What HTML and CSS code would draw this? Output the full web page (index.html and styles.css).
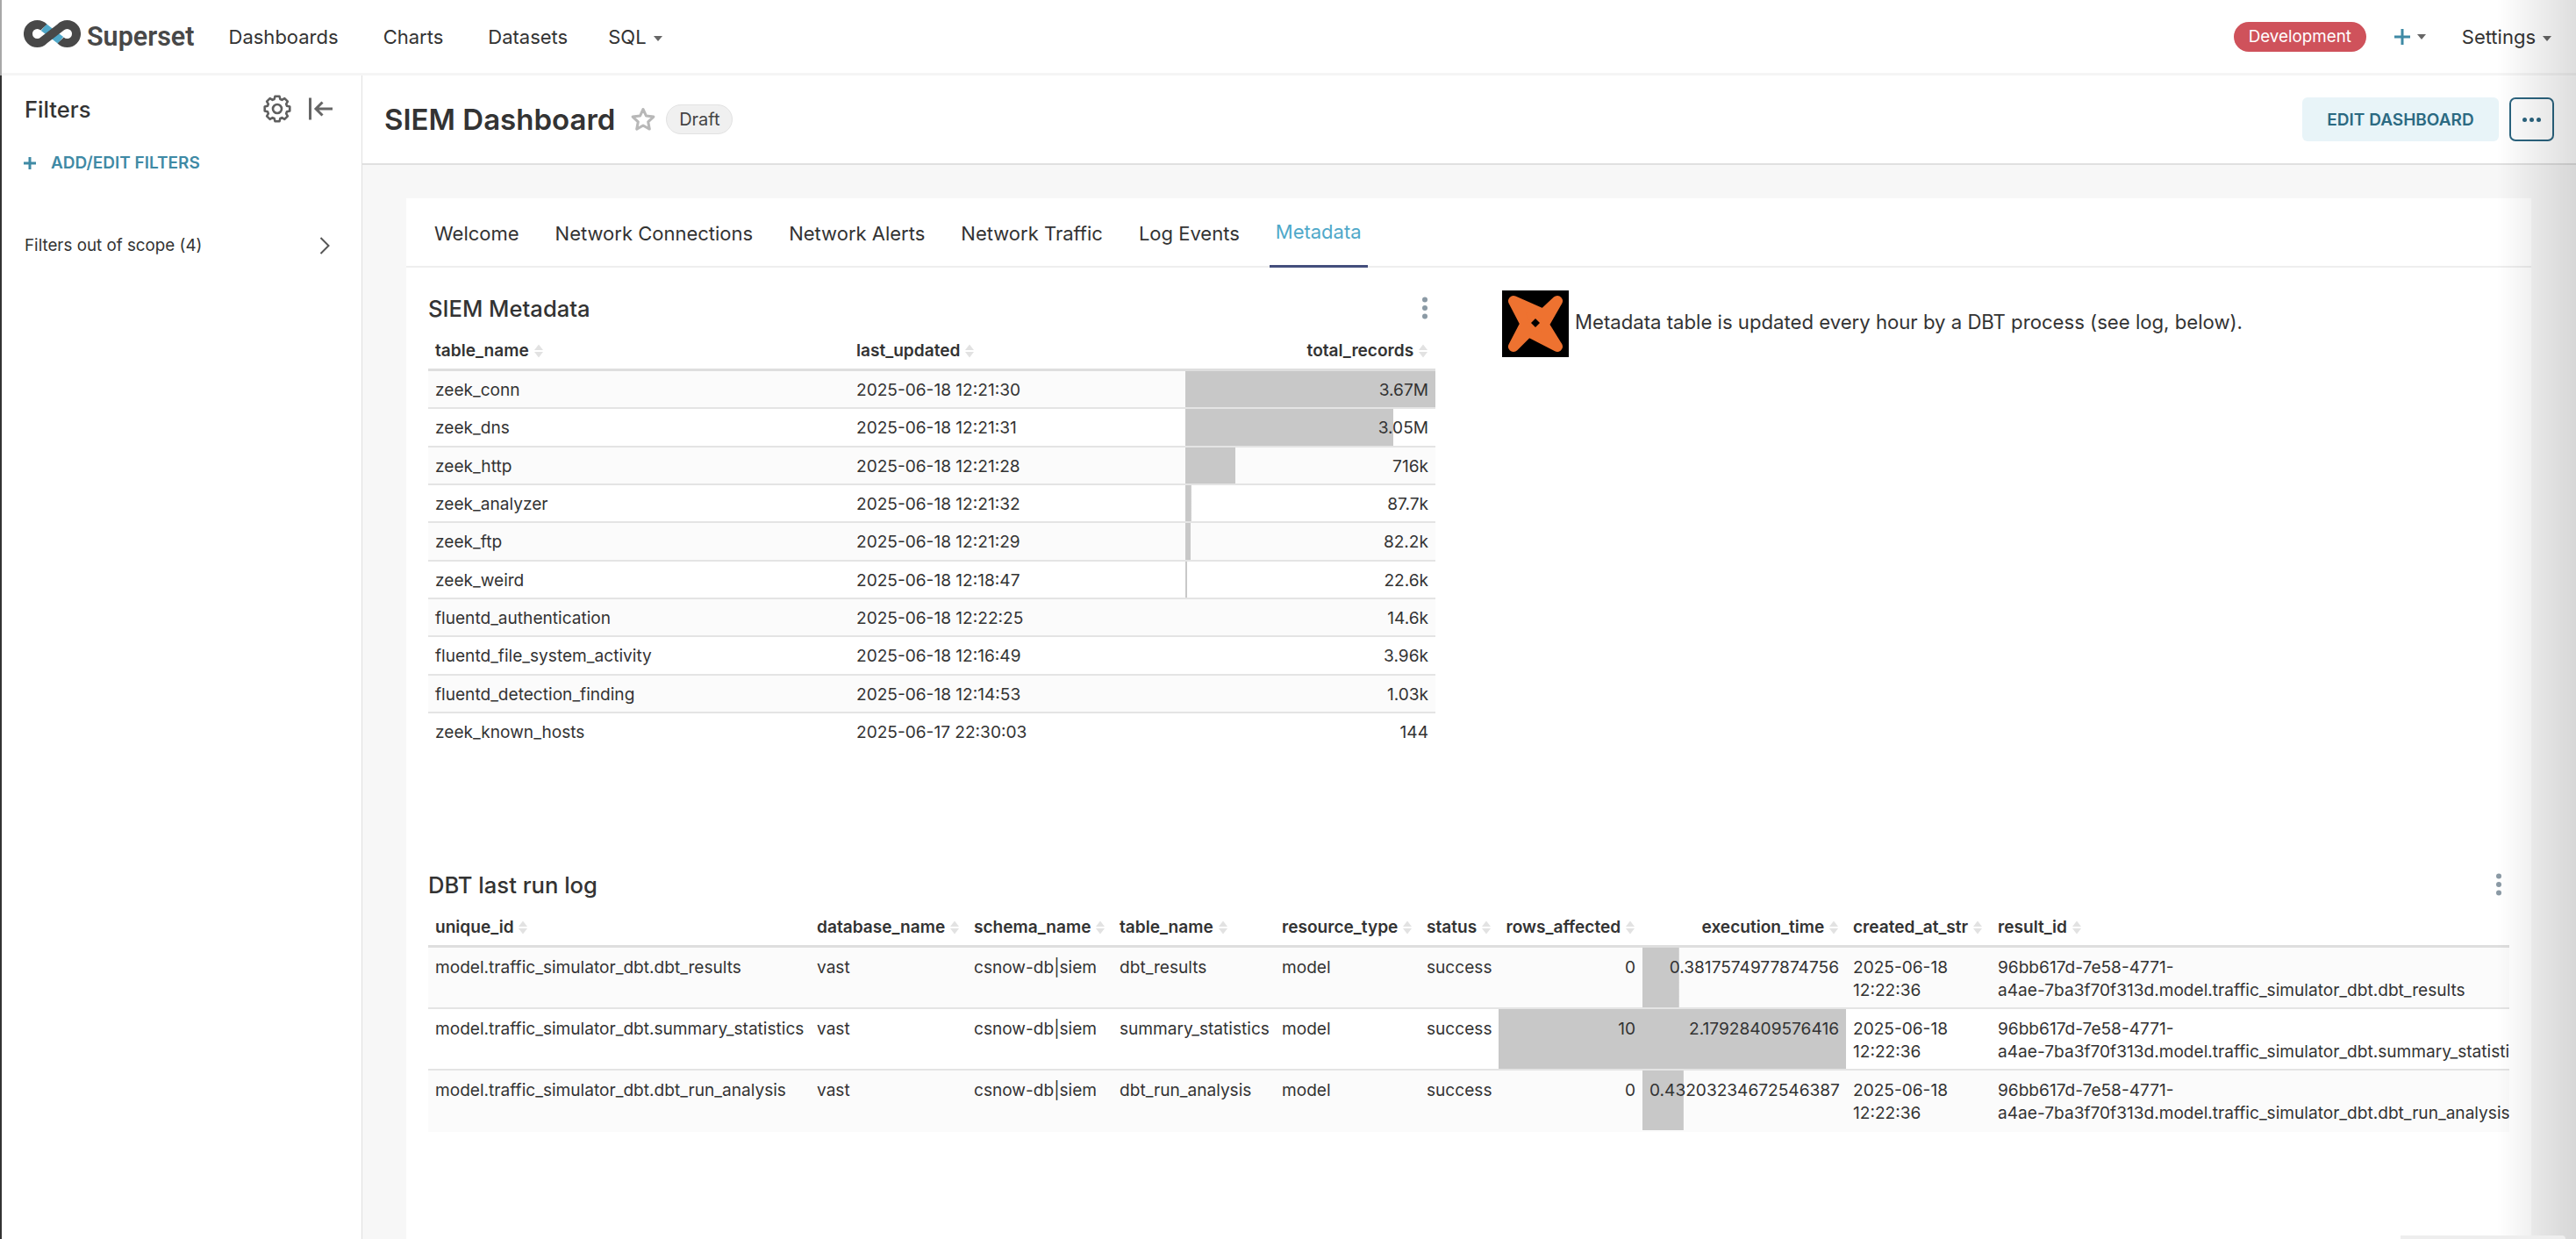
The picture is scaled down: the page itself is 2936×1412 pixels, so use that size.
FILE: index.html
```html
<!DOCTYPE html>
<html lang="en">
<head>
  <meta charset="UTF-8" />
  <title>SIEM Dashboard - Superset</title>
  <link rel="stylesheet" href="styles.css">
</head>
<body>
  <svg class="defs" width="0" height="0">
    <symbol id="sort" viewBox="0 0 12 16">
      <path d="M6 0.5 L11 7 H1 Z" fill="#e2e2e2"/>
      <path d="M6 15.5 L11 9 H1 Z" fill="#e2e2e2"/>
    </symbol>
    <symbol id="kebab" viewBox="0 0 8 26">
      <circle cx="4" cy="3.5" r="3" fill="#8b9aa5"/>
      <circle cx="4" cy="13" r="3" fill="#8b9aa5"/>
      <circle cx="4" cy="22.5" r="3" fill="#8b9aa5"/>
    </symbol>
  </svg>

  <header class="topnav">
    <div class="brand">
      <svg class="brand-logo" viewBox="0 0 65 31">
        <path d="M22.9 8.1 L42.1 22.9" fill="none" stroke="#4fa8c9" stroke-width="10"/>
        <path d="M22.9 8.1 A10.5 10.5 0 1 0 22.9 22.9 L42.1 8.1 A10.5 10.5 0 1 1 42.1 22.9" fill="none" stroke="#484848" stroke-width="10"/>
      </svg>
      <span class="brand-name">Superset</span>
    </div>
    <nav class="menu">
      <a>Dashboards</a>
      <a>Charts</a>
      <a>Datasets</a>
      <a>SQL<i class="caret"></i></a>
    </nav>
    <div class="nav-right">
      <span class="env">Development</span>
      <span class="plus">
        <svg width="18" height="18" viewBox="0 0 18 18"><path d="M9 0 V18 M0 9 H18" stroke="#3f8aa5" stroke-width="3"/></svg>
        <i class="caret"></i>
      </span>
      <span class="settings">Settings<i class="caret"></i></span>
    </div>
  </header>

  <div class="main">
    <aside class="sidebar">
      <div class="side-head">
        <h3>Filters</h3>
        <svg class="gear" viewBox="-17 -17 34 34">
          <path d="M2.52 -14.28 L3.36 -11 5.4 -10.15 8.32 -11.88 11.88 -8.32 10.15 -5.4 11 -3.36 14.28 -2.52 14.28 2.52 11 3.36 10.15 5.4 11.88 8.32 8.32 11.88 5.4 10.15 3.36 11 2.52 14.28 -2.52 14.28 -3.36 11 -5.4 10.15 -8.32 11.88 -11.88 8.32 -10.15 5.4 -11 3.36 -14.28 2.52 -14.28 -2.52 -11 -3.36 -10.15 -5.4 -11.88 -8.32 -8.32 -11.88 -5.4 -10.15 -3.36 -11 -2.52 -14.28 Z" fill="none" stroke="#5f5f5f" stroke-width="2.6" stroke-linejoin="round"/>
          <circle r="5" fill="none" stroke="#5f5f5f" stroke-width="2.6"/>
        </svg>
        <svg class="collapse" viewBox="0 0 28 26">
          <path d="M1.5 0.5 V25.5 M8 13 H27 M15.5 5.5 L8 13 L15.5 20.5" fill="none" stroke="#666" stroke-width="3"/>
        </svg>
      </div>
      <a class="add-filters">
        <svg width="14" height="14" viewBox="0 0 14 14"><path d="M7 0 V14 M0 7 H14" stroke="#3f8aa5" stroke-width="3"/></svg>
        ADD/EDIT FILTERS
      </a>
      <div class="out-of-scope">
        <span>Filters out of scope (4)</span>
        <svg width="12" height="20" viewBox="0 0 12 20"><path d="M1.5 1 L10.5 10 L1.5 19" fill="none" stroke="#555" stroke-width="2"/></svg>
      </div>
    </aside>

    <div class="content">
      <div class="titlebar">
        <h1>SIEM Dashboard</h1>
        <svg class="star" viewBox="0 0 28 26">
          <polygon points="14,1.5 17.5,9.1 25.9,10.1 19.7,15.9 21.3,24.1 14,20 6.7,24.1 8.3,15.9 2.1,10.1 10.5,9.1" fill="none" stroke="#b8b8b8" stroke-width="3" stroke-linejoin="round"/>
        </svg>
        <span class="draft">Draft</span>
        <div class="title-actions">
          <button class="edit-btn">EDIT DASHBOARD</button>
          <button class="more-btn"><i></i><i></i><i></i></button>
        </div>
      </div>

      <div class="canvas">
        <div class="card">
          <div class="tabs">
            <a>Welcome</a>
            <a>Network Connections</a>
            <a>Network Alerts</a>
            <a>Network Traffic</a>
            <a>Log Events</a>
            <a class="active">Metadata</a>
          </div>

          <div class="row">
            <section class="chart chart-meta">
              <div class="chart-head">
                <h2>SIEM Metadata</h2>
                <svg class="kebab"><use href="#kebab"/></svg>
              </div>
              <table class="grid meta-table">
                <colgroup><col class="m1"><col class="m2"><col class="m3"></colgroup>
                <thead>
                  <tr>
                    <th>table_name <svg class="sort"><use href="#sort"/></svg></th>
                    <th>last_updated <svg class="sort"><use href="#sort"/></svg></th>
                    <th class="num">total_records <svg class="sort"><use href="#sort"/></svg></th>
                  </tr>
                </thead>
                <tbody>
                  <tr><td>zeek_conn</td><td>2025-06-18 12:21:30</td><td class="num bar" style="background-size:100% 100%">3.67M</td></tr>
                  <tr><td>zeek_dns</td><td>2025-06-18 12:21:31</td><td class="num bar" style="background-size:83.2% 100%">3.05M</td></tr>
                  <tr><td>zeek_http</td><td>2025-06-18 12:21:28</td><td class="num bar" style="background-size:20% 100%">716k</td></tr>
                  <tr><td>zeek_analyzer</td><td>2025-06-18 12:21:32</td><td class="num bar" style="background-size:2.4% 100%">87.7k</td></tr>
                  <tr><td>zeek_ftp</td><td>2025-06-18 12:21:29</td><td class="num bar" style="background-size:2.2% 100%">82.2k</td></tr>
                  <tr><td>zeek_weird</td><td>2025-06-18 12:18:47</td><td class="num bar" style="background-size:0.7% 100%">22.6k</td></tr>
                  <tr><td>fluentd_authentication</td><td>2025-06-18 12:22:25</td><td class="num">14.6k</td></tr>
                  <tr><td>fluentd_file_system_activity</td><td>2025-06-18 12:16:49</td><td class="num">3.96k</td></tr>
                  <tr><td>fluentd_detection_finding</td><td>2025-06-18 12:14:53</td><td class="num">1.03k</td></tr>
                  <tr><td>zeek_known_hosts</td><td>2025-06-17 22:30:03</td><td class="num">144</td></tr>
                </tbody>
              </table>
            </section>

            <div class="note">
              <svg class="dbt-logo" viewBox="0 0 76 76">
                <rect width="76" height="76" fill="#000"/>
                <polygon points="13,12 47,27 63,12 47.5,39 63,64 30,47 13,64 26.5,38" fill="#ee7230" stroke="#ee7230" stroke-width="12" stroke-linejoin="round"/>
                <polygon points="38,32 43,37 38,42 33,37" fill="#000"/>
              </svg>
              <span class="note-text">Metadata table is updated every hour by a DBT process (see log, below).</span>
            </div>
          </div>

          <section class="chart chart-log">
            <div class="chart-head">
              <h2>DBT last run log</h2>
              <svg class="kebab"><use href="#kebab"/></svg>
            </div>
            <table class="grid log-table">
              <colgroup>
                <col class="l1"><col class="l2"><col class="l3"><col class="l4"><col class="l5">
                <col class="l6"><col class="l7"><col class="l8"><col class="l9"><col class="l10">
              </colgroup>
              <thead>
                <tr>
                  <th>unique_id <svg class="sort"><use href="#sort"/></svg></th>
                  <th>database_name <svg class="sort"><use href="#sort"/></svg></th>
                  <th>schema_name <svg class="sort"><use href="#sort"/></svg></th>
                  <th>table_name <svg class="sort"><use href="#sort"/></svg></th>
                  <th>resource_type <svg class="sort"><use href="#sort"/></svg></th>
                  <th>status <svg class="sort"><use href="#sort"/></svg></th>
                  <th class="num">rows_affected <svg class="sort"><use href="#sort"/></svg></th>
                  <th class="num">execution_time <svg class="sort"><use href="#sort"/></svg></th>
                  <th>created_at_str <svg class="sort"><use href="#sort"/></svg></th>
                  <th>result_id <svg class="sort"><use href="#sort"/></svg></th>
                </tr>
              </thead>
              <tbody>
                <tr>
                  <td>model.traffic_simulator_dbt.dbt_results</td><td>vast</td><td>csnow-db|siem</td><td>dbt_results</td><td>model</td><td>success</td>
                  <td class="num">0</td>
                  <td class="num bar" style="background-size:18% 100%">0.3817574977874756</td>
                  <td>2025-06-18 12:22:36</td>
                  <td class="result">96bb617d-7e58-4771-<br>a4ae-7ba3f70f313d.model.traffic_simulator_dbt.dbt_results</td>
                </tr>
                <tr>
                  <td>model.traffic_simulator_dbt.summary_statistics</td><td>vast</td><td>csnow-db|siem</td><td>summary_statistics</td><td>model</td><td>success</td>
                  <td class="num bar" style="background-size:100% 100%">10</td>
                  <td class="num bar" style="background-size:100% 100%">2.17928409576416</td>
                  <td>2025-06-18 12:22:36</td>
                  <td class="result">96bb617d-7e58-4771-<br>a4ae-7ba3f70f313d.model.traffic_simulator_dbt.summary_statistics</td>
                </tr>
                <tr>
                  <td>model.traffic_simulator_dbt.dbt_run_analysis</td><td>vast</td><td>csnow-db|siem</td><td>dbt_run_analysis</td><td>model</td><td>success</td>
                  <td class="num">0</td>
                  <td class="num bar" style="background-size:20.2% 100%">0.43203234672546387</td>
                  <td>2025-06-18 12:22:36</td>
                  <td class="result">96bb617d-7e58-4771-<br>a4ae-7ba3f70f313d.model.traffic_simulator_dbt.dbt_run_analysis</td>
                </tr>
              </tbody>
            </table>
          </section>
        </div>
      </div>
    </div>
  </div>

  <div class="edge-line"></div>
  <div class="edge-shadow"></div>
  <div class="corner-panel"></div>
</body>
</html>
```

FILE: styles.css
```css
body {
  font-family: Inter, "Noto Sans", sans-serif;
  font-size: 19.1px;
  color: #333;
  background: #fff;
  margin: 0;
  height: 100vh;
  overflow: hidden;
}

.defs {
  position: absolute;
}

/* top nav */
.topnav {
  display: flex;
  align-items: center;
  height: 83px;
  padding: 0 28px 0 27px;
  border-bottom: 3px solid #f5f5f5;
}

.brand {
  display: flex;
  align-items: center;
  gap: 7px;
}

.brand-logo {
  width: 65px;
  height: 31px;
  margin-top: -6px;
}

.brand-name {
  font-family: Roboto, sans-serif;
  font-weight: 600;
  font-size: 30.5px;
  color: #484848;
}

.menu {
  display: flex;
  gap: 51px;
  margin-left: 39px;
  font-size: 22px;
}

.menu a:last-child {
  margin-left: -5px;
}

.caret {
  display: inline-block;
  margin-left: 8px;
  vertical-align: middle;
  border-left: 5px solid transparent;
  border-right: 5px solid transparent;
  border-top: 6px solid #666;
}

.nav-right {
  display: flex;
  align-items: center;
  margin-left: auto;
  font-size: 22px;
}

.env {
  display: flex;
  align-items: center;
  justify-content: center;
  width: 151px;
  height: 34px;
  border-radius: 17px;
  background: #cf525b;
  color: #fff;
  font-size: 18.8px;
}

.plus {
  display: flex;
  align-items: center;
  margin-left: 32px;
  margin-right: 41px;
}

/* sidebar */
.main {
  display: flex;
  height: calc(100vh - 86px);
}

.sidebar {
  flex: 0 0 413px;
  box-sizing: border-box;
  padding: 0 36px 0 28px;
  border-right: 1px solid #e0e0e0;
}

.side-head {
  display: flex;
  align-items: center;
  height: 76px;
  margin-right: -4px;
}

.side-head h3 {
  margin: 0 auto 0 0;
  font-size: 25.6px;
  font-weight: 500;
}

.gear {
  width: 34px;
  height: 34px;
  margin-right: 19px;
}

.collapse {
  width: 28px;
  height: 26px;
}

.add-filters {
  display: flex;
  align-items: center;
  gap: 17px;
  margin: 12px 0 0 -1px;
  color: #3f8aa5;
  font-weight: 600;
  font-size: 19px;
}

.out-of-scope {
  display: flex;
  align-items: center;
  justify-content: space-between;
  margin-top: 71px;
  font-size: 18.8px;
}

/* title bar */
.content {
  flex: 1;
  display: flex;
  flex-direction: column;
  min-width: 0;
}

.titlebar {
  display: flex;
  align-items: center;
  height: 100px;
  padding: 0 25px;
  border-bottom: 2px solid #e0e0e0;
}

.titlebar h1 {
  margin: 0;
  font-size: 33px;
  font-weight: 600;
}

.star {
  width: 28px;
  height: 26px;
  margin-left: 18px;
}

.draft {
  display: flex;
  align-items: center;
  justify-content: center;
  width: 76px;
  height: 34px;
  box-sizing: border-box;
  margin-left: 12px;
  border: 1px solid #e2e2e2;
  border-radius: 17px;
  background: #f0f0f0;
  color: #444;
  font-size: 20px;
}

.title-actions {
  display: flex;
  gap: 12px;
  margin-left: auto;
}

.edit-btn {
  width: 224px;
  height: 50px;
  border: none;
  border-radius: 6px;
  background: #e8f4f8;
  color: #2b6a82;
  font-family: inherit;
  font-size: 19px;
  font-weight: 600;
}

.more-btn {
  display: flex;
  align-items: center;
  justify-content: center;
  gap: 3px;
  width: 51px;
  height: 50px;
  border: 2px solid #2c6580;
  border-radius: 7px;
  background: #fff;
}

.more-btn i {
  width: 5px;
  height: 5px;
  border-radius: 50%;
  background: #2c6580;
}

/* dashboard canvas */
.canvas {
  flex: 1;
  background: #f7f7f7;
  padding: 38px 51px 0 50px;
}

.card {
  height: 100%;
  background: #fff;
}

.tabs {
  display: flex;
  gap: 27px;
  height: 79px;
  padding-left: 25px;
  border-bottom: 2px solid #eee;
  box-sizing: border-box;
  font-size: 22px;
}

.tabs a {
  display: flex;
  align-items: center;
  padding: 0 7px;
  height: 79px;
  box-sizing: border-box;
  margin-bottom: -2px;
}

.tabs .active {
  color: #4fa8c9;
  border-bottom: 3px solid #444e7c;
}

.row {
  display: flex;
  padding: 0 25px;
}

.chart-meta {
  flex: 0 0 1148px;
  margin-top: 26px;
}

.chart-log {
  margin: 132px 25px 0;
}

.chart-head {
  display: flex;
  align-items: center;
  justify-content: space-between;
  height: 40px;
  padding-right: 8px;
}

.chart-head h2 {
  margin: 0;
  font-size: 25.6px;
  font-weight: 500;
}

.kebab {
  width: 8px;
  height: 26px;
}

.note {
  display: flex;
  align-items: center;
  gap: 7px;
  margin: 26px 0 0 76px;
  align-self: flex-start;
  font-size: 22.15px;
}

.note-text {
  padding-bottom: 4px;
}

.dbt-logo {
  width: 76px;
  height: 76px;
}

/* tables */
.grid {
  width: 100%;
  table-layout: fixed;
  border-collapse: separate;
  border-spacing: 0;
}

.grid th {
  height: 52px;
  padding: 0 8px 8px;
  box-sizing: border-box;
  border-bottom: 3px solid #dedede;
  vertical-align: bottom;
  text-align: left;
  font-weight: 600;
  line-height: 26px;
  white-space: nowrap;
}

.grid td {
  padding: 9px 8px 7px;
  border-bottom: 2px solid #e4e4e4;
  vertical-align: top;
  line-height: 26px;
  overflow: hidden;
}

.grid tbody tr:nth-child(odd) td {
  background-color: #fbfbfb;
}

.grid tbody tr:last-child td {
  border-bottom-color: transparent;
}

.grid .num {
  text-align: right;
}

.grid td.bar {
  background-image: linear-gradient(#c8c8c8, #c8c8c8);
  background-repeat: no-repeat;
}

.meta-table td {
  height: 43.33px;
  box-sizing: border-box;
  padding-top: 8px;
  padding-bottom: 6px;
  white-space: nowrap;
}

.log-table td {
  height: 69.6px;
  box-sizing: border-box;
}

.grid .result {
  white-space: nowrap;
}

.sort {
  width: 12px;
  height: 16px;
  vertical-align: -2px;
}

.m1 { width: 480px; }
.m2 { width: 383px; }
.m3 { width: 285px; }

.l1 { width: 435px; }
.l2 { width: 179px; }
.l3 { width: 166px; }
.l4 { width: 185px; }
.l5 { width: 165px; }
.l6 { width: 90px; }
.l7 { width: 164px; }
.l8 { width: 232px; }
.l9 { width: 165px; }
.l10 { width: 591px; }

/* bits of the desktop around the window */
.edge-line {
  position: fixed;
  left: 0;
  top: 0;
  bottom: 0;
  width: 2px;
  background: linear-gradient(#a8a8a8 86px, #333 86px);
}

.edge-shadow {
  position: fixed;
  right: 0;
  top: 0;
  bottom: 0;
  width: 90px;
  background: linear-gradient(to right, rgba(0, 0, 0, 0), rgba(0, 0, 0, 0.13));
  pointer-events: none;
}

.corner-panel {
  position: fixed;
  right: 12px;
  bottom: 0;
  width: 188px;
  height: 4px;
  background: #eee;
  border-radius: 0 8px 0 0;
}
```
